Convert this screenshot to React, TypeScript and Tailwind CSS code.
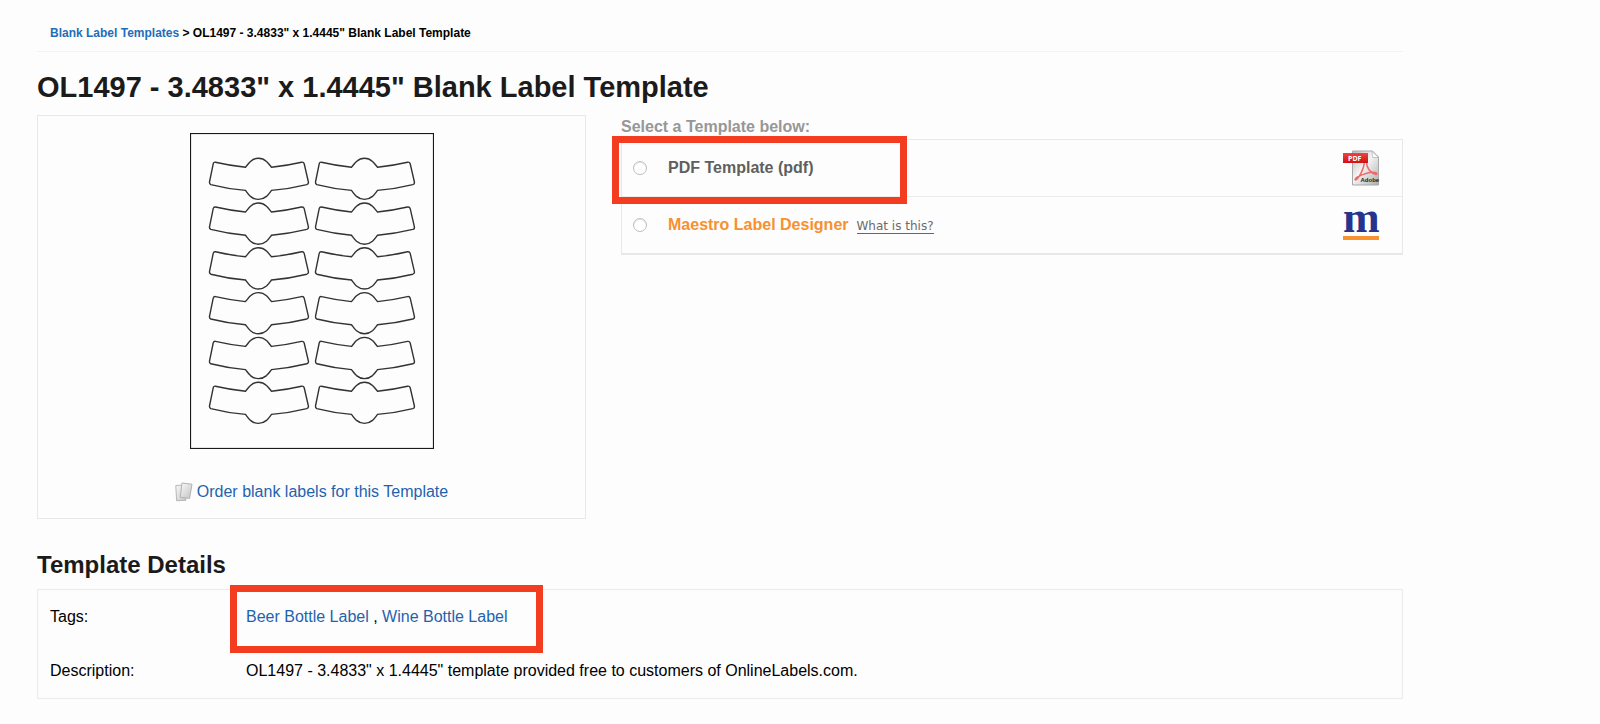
const ROWS = [0, 1, 2, 3, 4, 5]
const COLS = [0, 1]

const TAGS = ['Beer Bottle Label', 'Wine Bottle Label']

const LABEL_PATH =
  'M6.5 4.6 Q21 8 36.5 9.6 C38.5 7.5 39.5 5.6 41.5 3.8 Q45 .6 49.5 .6 Q54 .6 57.5 3.8 C59.5 5.6 60.5 7.5 62.5 9.6 Q78 8 92.5 4.6 Q94.6 4.2 95.2 6.2 L99.4 24.4 Q99.8 26.4 97.8 27 Q80 31.4 62.5 32.8 C60.5 35.4 59.5 37 57.5 38.8 Q54 41.8 49.5 41.8 Q45 41.8 41.5 38.8 C39.5 37 38.5 35.4 36.5 32.8 Q19 31.4 1.8 27 Q.2 26.2 .5 24.4 L4.2 6.2 Q4.8 4.2 6.5 4.6 Z'

function LabelSheet() {
  return (
    <svg width="244" height="316" viewBox="0 0 244 316" fill="none" className="block">
      <rect x="0.5" y="0.5" width="243" height="315" stroke="#1a1a1a" strokeWidth="1.2" />
      {ROWS.map((r) =>
        COLS.map((c) => (
          <path
            key={`${r}-${c}`}
            d={LABEL_PATH}
            stroke="#333"
            strokeWidth="1.4"
            transform={`translate(${19 + c * 106} ${24.6 + r * 44.8})`}
          />
        )),
      )}
    </svg>
  )
}

function SheetsIcon() {
  return (
    <svg width="18" height="20" viewBox="0 0 18 20" className="shrink-0">
      <defs>
        <linearGradient id="sheet" x1="0" y1="0" x2="1" y2="1">
          <stop offset="0" stopColor="#fafafa" />
          <stop offset="1" stopColor="#c2c2c2" />
        </linearGradient>
      </defs>
      <path d="M.8 3.5 9 3 11 18.2 1.6 18.8Z" fill="url(#sheet)" stroke="#b8b8b8" />
      <path d="M7 1 17 2.2 14.6 16.4 5.2 15.2Z" fill="url(#sheet)" stroke="#b4b4b4" />
    </svg>
  )
}

function PdfIcon() {
  return (
    <svg width="37" height="37" viewBox="0 0 37 37" className="overflow-visible">
      <defs>
        <linearGradient id="page" x1="0" y1="0" x2="1" y2="1">
          <stop offset="0" stopColor="#b9b9b9" />
          <stop offset="0.45" stopColor="#f4f4f4" />
          <stop offset="1" stopColor="#adadad" />
        </linearGradient>
        <linearGradient id="banner" x1="0" y1="0" x2="0" y2="1">
          <stop offset="0" stopColor="#f0433f" />
          <stop offset="1" stopColor="#cf1113" />
        </linearGradient>
      </defs>
      <path d="M9.5 1H29.5L35.5 7V35H9.5Z" fill="url(#page)" stroke="#a8a8a8" />
      <path d="M29 1.5 35.5 7.500H29.5Z" fill="#fff" stroke="#b0b0b0" strokeWidth="0.7" />
      <path
        d="M12.5 30C15.5 29 21 19 21.3 12.8c0-2 2.2-2 2.2 0C23.6 18 28 23.5 33 24.400c1.600.2 1-1.800-1-2-6-.6-12 1.800-17.500 4.600-2 1.200-3 3-2 3Z"
        fill="none"
        stroke="#ee6a6a"
        strokeWidth="1.5"
      />
      <rect x="0" y="3" width="25" height="10" fill="url(#banner)" />
      <text x="5" y="10.6" fontSize="7" fontWeight="700" fill="#fff" fontFamily="Open Sans, sans-serif">
        PDF
      </text>
      <text x="17.5" y="32" fontSize="6" fontWeight="700" fill="#222" fontFamily="Liberation Sans, sans-serif">
        Adobe
      </text>
    </svg>
  )
}

function MaestroIcon() {
  return (
    <svg width="37" height="32" viewBox="0 0 37 32" className="overflow-visible">
      <text x="0" y="23" fontSize="44" fontWeight="700" fill="#27348b" fontFamily="Liberation Serif, serif">
        m
      </text>
      <rect x="0" y="27" width="36" height="4" fill="#f7922f" />
    </svg>
  )
}

const RADIO =
  'size-[14px] shrink-0 appearance-none rounded-full border border-[#bdbdbd] bg-white shadow-[inset_0_1px_1px_#e4e4e4] checked:border-4 checked:border-[#1f68b5]'

export default function App() {
  return (
    <div className="min-h-screen bg-[#fdfdfd] pr-[197px] pl-[37px] font-['Liberation_Sans',Arial,sans-serif] text-base text-black">
      <nav aria-label="Breadcrumb" className="border-b border-[#f3f3f3] px-[13px] pt-6 pb-[9px] text-xs leading-[18px] font-bold">
        <a href="#templates" className="text-[#1f6db9]">Blank Label Templates</a>
        {' > OL1497 - 3.4833" x 1.4445" Blank Label Template'}
      </nav>

      <h1 className="pt-[17px] pb-[10px] text-[29px] leading-9 font-bold text-[#1b1b1b]">
        OL1497 - 3.4833" x 1.4445" Blank Label Template
      </h1>

      <main>
        <div className="flex items-start justify-between">
          {/* preview */}
          <section className="flex w-[41%] max-w-[549px] flex-col items-center border border-[#e8e8e8] pt-[17px] pb-[14px]">
            <LabelSheet />
            <a href="#order" className="mt-[31px] flex items-center gap-1 leading-6 text-[#1f63ae]">
              <SheetsIcon />
              Order blank labels for this Template
            </a>
          </section>

          {/* template choices */}
          <fieldset className="w-[782px]">
            <legend className="pt-px pb-px leading-[22px] font-bold text-[#979797]">Select a Template below:</legend>
            <div className="border border-b-2 border-[#e8e8e8]">
              <div className="relative flex h-[57px] items-center border-b border-[#ececec] pr-[22px] pl-[11px]">
                <input id="pdf" type="radio" name="template" className={RADIO} />
                <label htmlFor="pdf" className="ml-[21px] flex-1 font-bold text-[#5f5f5f]">PDF Template (pdf)</label>
                <PdfIcon />
                <div className="pointer-events-none absolute -top-1 -left-[10px] h-[68px] w-[295px] border-[7px] border-[#f43c21]" />
              </div>
              <div className="flex h-14 items-center pr-[22px] pl-[11px]">
                <input id="maestro" type="radio" name="template" className={RADIO} />
                <div className="ml-[21px] flex flex-1 items-baseline gap-2">
                  <label htmlFor="maestro" className="font-bold text-[#f7902f]">Maestro Label Designer</label>
                  <a href="#what" className="border-b border-[#666] font-['DejaVu_Sans',Verdana,sans-serif] text-xs leading-[14px] text-[#6b6b6b]">
                    What is this?
                  </a>
                </div>
                <MaestroIcon />
              </div>
            </div>
          </fieldset>
        </div>

        <h2 className="pt-[30px] pb-[9px] text-2xl leading-[31px] font-bold text-[#1b1b1b]">Template Details</h2>
        <dl className="grid grid-cols-[196px_1fr] gap-y-[30px] border border-[#ebebeb] px-3 pt-[15px] pb-[15px] leading-6">
          <dt>Tags:</dt>
          <dd className="relative">
            {TAGS.map((tag, i) => (
              <span key={tag}>
                {i > 0 && ' , '}
                <a href="#tag" className="text-[#1f63ae]">{tag}</a>
              </span>
            ))}
            <div className="pointer-events-none absolute -top-5 -left-4 h-[68px] w-[313px] border-[7px] border-[#f43c21]" />
          </dd>
          <dt>Description:</dt>
          <dd>OL1497 - 3.4833" x 1.4445" template provided free to customers of OnlineLabels.com.</dd>
        </dl>
      </main>
    </div>
  )
}
